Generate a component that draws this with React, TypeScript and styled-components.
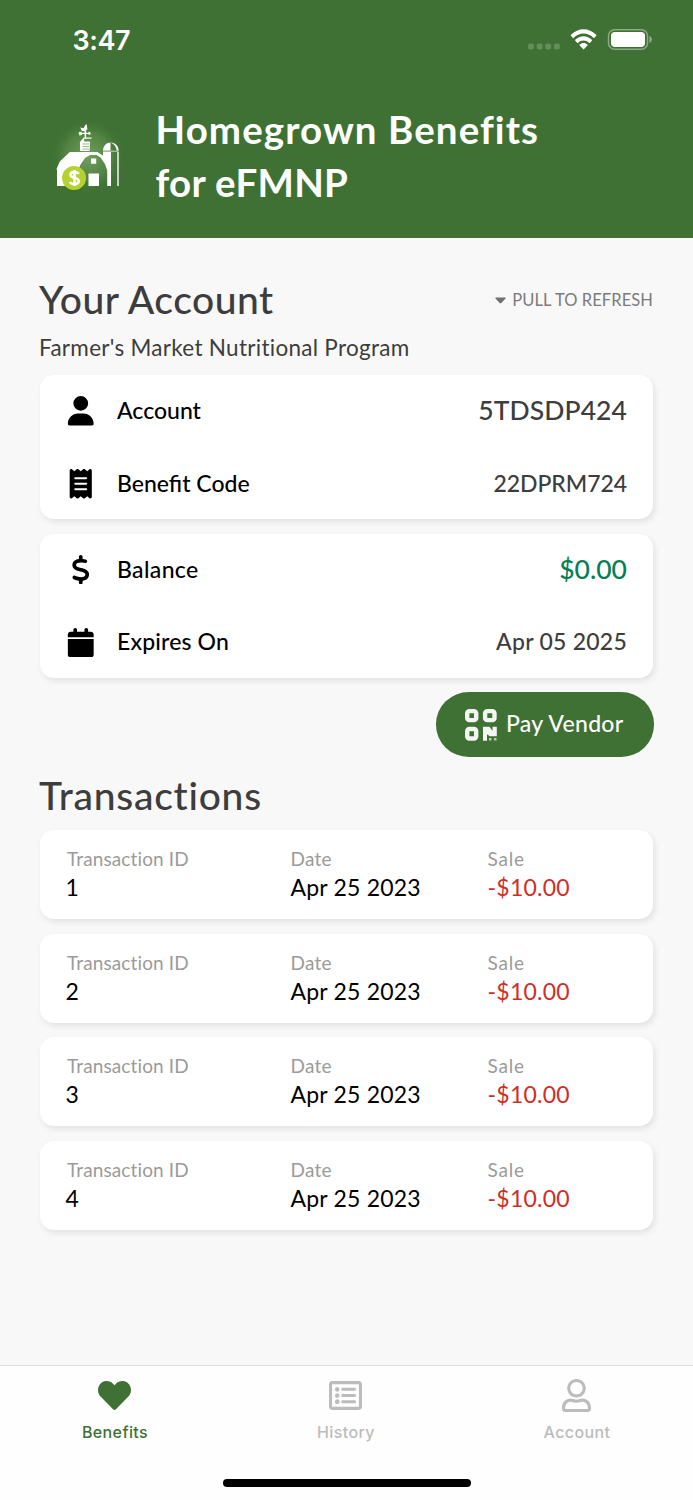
import React from "react";
import styled, { createGlobalStyle } from "styled-components";
import { FaCalendar, FaDollarSign, FaReceipt, FaUser } from "react-icons/fa6";
import { FaHeart, FaRegListAlt, FaRegUser } from "react-icons/fa";

const green = "#3e7133";

const GlobalStyle = createGlobalStyle`
  * { box-sizing: border-box; }
  body { margin: 0; background: #f8f8f8; font-family: Lato, "Noto Sans", sans-serif; color: #000; }
  svg { display: block; flex: none; }
`;

const Screen = styled.div`
  width: 693px;
  height: 1500px;
  display: flex;
  flex-direction: column;
  background: #f8f8f8;
  overflow: hidden;
  white-space: nowrap;
`;

const Header = styled.header`
  height: 238px;
  background: ${green};
  color: #fff;
`;

const StatusBar = styled.div`
  height: 78px;
  padding: 0 41px 0 72.5px;
  display: flex;
  align-items: center;
  justify-content: space-between;
`;

const Clock = styled.span`
  font: 600 27px/32px Inter, sans-serif;
  letter-spacing: -0.4px;
  padding-top: 3px;
`;

const Brand = styled.div`
  display: flex;
  align-items: flex-start;
  padding-left: 50px;
`;

const Title = styled.h1`
  margin: 25px 0 0 25.5px;
  font-size: 38.5px;
  font-weight: 700;
  line-height: 53px;
`;

const TitleLine = styled.span<{ $ls: number }>`
  display: block;
  letter-spacing: ${(p) => p.$ls}px;
`;

const Main = styled.main`
  flex: 1;
  padding: 37px 40px 0 39.5px;
`;

const SectionHead = styled.div`
  display: flex;
  align-items: center;
  justify-content: space-between;
  height: 50px;
`;

const Heading = styled.h2<{ $ls: number }>`
  margin: -1px 0 1px -0.5px;
  font-size: 39px;
  font-weight: 500;
  line-height: 50px;
  letter-spacing: ${(p) => p.$ls}px;
  color: #3d3d3d;
`;

const Refresh = styled.div`
  display: flex;
  align-items: center;
  gap: 6px;
  font-size: 16.5px;
  line-height: 20px;
  letter-spacing: 0.08px;
  color: #7b7b7b;
`;

const Program = styled.p`
  margin: 7px 0 12px -0.5px;
  font-size: 22.5px;
  line-height: 31px;
  letter-spacing: 0.28px;
  color: #3d3d3d;
`;

const Card = styled.section`
  height: 144px;
  margin-bottom: 14.5px;
  padding: 0 26px;
  border-radius: 14px;
  background: #fff;
  box-shadow: 2px 3px 6px rgba(0, 0, 0, 0.09);
`;

const Row = styled.div`
  display: flex;
  align-items: center;
  height: 72px;

  & + & {
    padding-top: 1.5px;
  }
`;

const IconSlot = styled.span`
  width: 31px;
  display: flex;
  justify-content: center;
  margin-right: 20.5px;
`;

const RowLabel = styled.span<{ $ls: number }>`
  flex: 1;
  font-size: 23px;
  font-weight: 500;
  padding-bottom: 2px;
  letter-spacing: ${(p) => p.$ls}px;
`;

const RowValue = styled.span<{ $size: number; $ls: number; $color?: string }>`
  font-size: ${(p) => p.$size}px;
  font-weight: 500;
  padding-bottom: 2px;
  letter-spacing: ${(p) => p.$ls}px;
  color: ${(p) => p.$color ?? "#3d3d3d"};
`;

const PayButton = styled.button`
  display: flex;
  align-items: center;
  width: 218px;
  height: 64.5px;
  margin: 0 -0.5px 14.5px auto;
  padding: 0 0 0 29px;
  border: 0;
  border-radius: 33px / 32px;
  background: ${green};
  color: #fff;
  font: 500 23px/30px Lato, "Noto Sans", sans-serif;
  letter-spacing: 0.3px;
`;

const PayText = styled.span`
  margin-left: 8.5px;
  padding-bottom: 3px;
`;

const TransactionList = styled.div`
  margin-top: 10px;
  display: grid;
  gap: 14.6px;
`;

const Transaction = styled.article`
  height: 89px;
  padding: 14px 26px 0;
  display: grid;
  grid-template-columns: 225px 197px 1fr;
  border-radius: 14px;
  background: #fff;
  box-shadow: 2px 3px 6px rgba(0, 0, 0, 0.09);
`;

const FieldLabel = styled.div<{ $ls: number; $indent?: number }>`
  padding-left: ${(p) => p.$indent ?? 0}px;
  font-size: 19px;
  line-height: 30px;
  letter-spacing: ${(p) => p.$ls}px;
  color: #9b9b9b;
`;

const FieldValue = styled.div<{ $ls?: number; $color?: string }>`
  font-size: 23px;
  line-height: 26px;
  letter-spacing: ${(p) => p.$ls ?? 0}px;
  color: ${(p) => p.$color ?? "#000"};
`;

const TabBar = styled.nav`
  height: 135.5px;
  flex: none;
  border-top: 1.5px solid #dedede;
  background: #fefefe;
`;

const Tabs = styled.div`
  display: grid;
  grid-template-columns: repeat(3, 1fr);
  height: 109px;
`;

const Tab = styled.div<{ $active?: boolean }>`
  display: flex;
  flex-direction: column;
  align-items: center;
  padding: 13.5px 2px 0 0;
  color: ${(p) => (p.$active ? green : "#bbbcbd")};
  font: 500 16px/20px Inter, sans-serif;
  letter-spacing: 0.4px;
`;

const TabLabel = styled.span`
  margin: 9.5px 0 0 1px;
`;

const HomeIndicator = styled.div`
  width: 248px;
  height: 8px;
  margin: 4px auto 0;
  border-radius: 4px;
  background: #000;
`;

const StatusIcons = () => (
  <svg width="124" height="24" viewBox="528 27 124 24">
    <g fill="#fff" fillOpacity=".2">
      <rect x="528" y="43.5" width="5.8" height="6" rx="1.8" />
      <rect x="536.7" y="43.5" width="5.8" height="6" rx="1.8" />
      <rect x="545.3" y="43.5" width="5.8" height="6" rx="1.8" />
      <rect x="554" y="43.5" width="5.8" height="6" rx="1.8" />
    </g>
    <path
      transform="translate(569.8 29) scale(1.62 1.78)"
      fill="#fff"
      d="M8.5 2.5c2.3 0 4.5.9 6.2 2.5.1.1.3.1.4 0l1.2-1.2c.2-.2.2-.3 0-.5C12-.9 5-.9.7 3.3c-.2.2-.2.3 0 .5L1.9 5c.1.1.3.1.4 0C4 3.4 6.2 2.5 8.5 2.5zm0 4c1.3 0 2.5.5 3.4 1.3.1.1.3.1.5 0l1.2-1.2c.2-.2.2-.3 0-.5-2.9-2.7-7.3-2.7-10.2 0-.2.2-.2.3 0 .5l1.2 1.2c.2.1.4.1.5 0 .9-.8 2.1-1.3 3.4-1.3zm2.4 2.7c.1-.2.1-.3 0-.5-1.4-1.2-3.4-1.2-4.8 0-.1.2-.1.3 0 .5l2.1 2.1c.2.2.4.2.6 0z"
    />
    <rect x="608.5" y="29.7" width="39" height="19.5" rx="6" fill="none" stroke="#fff" strokeOpacity=".4" strokeWidth="1.5" />
    <rect x="611" y="32" width="34" height="15" rx="4" fill="#fff" />
    <path d="M649.5 36v7c1.4-.6 2.300-1.900 2.300-3.500s-.9-2.900-2.300-3.500z" fill="#fff" fillOpacity=".45" />
  </svg>
);

const FarmLogo = () => (
  <svg width="80" height="120" viewBox="50 78 80 120">
    <defs>
      <radialGradient id="glow">
        <stop offset="0" stopColor="#79a565" stopOpacity=".9" />
        <stop offset=".6" stopColor="#659451" stopOpacity=".55" />
        <stop offset="1" stopColor={green} stopOpacity="0" />
      </radialGradient>
    </defs>
    <circle cx="88" cy="156" r="38" fill="url(#glow)" />
    <g fill="#fff">
      <path d="M57 186v-16.500h-.7l3.500-8 10-9.500H97.500l6 4 4.500 7 2.200 6.500V186h-3v-15.500l-2.200-6.500-4.500-6.500-4-2.500H90l-5 3-5 7.500-3 9V186z" />
      <path d="M80 151v-8.500h-.5l4.700-5.500v4.500H90l-.4 9.500z" />
      <path d="M84.500 137.500h7v1.200h-7z" />
      <path d="M84.600 130h1.500v9h-1.500z" />
      <path d="M78.800 132.800h11.500v1.200H78.800z" />
      <path d="M78.800 132l2.800-.3.400 3.300-2.700.4zM88.500 131.700l1.800.6v2.700l-1.800-.4z" />
      <path d="M80.200 127.500l3.300.8 1.900-3.300 1.200-1 .8 5-1.900 2.200-3.600-.2z" />
      <path d="M103 150.500c.2-4.500 3.500-8 7.500-8v8zM110.500 142.500c5 .2 8.200 3.600 8.200 8h-2.200c0-3.200-2.300-6.600-6-8z" />
      <path d="M103 152h8v34h-1.500v-17l-3-7.500-3.500-5.500z" />
      <path d="M117.300 152h1.400v34h-1.400z" />
      <path d="M91 158.500h5.200v5.300H91zM88.500 173.500H99V186H88.500z" />
    </g>
    <path d="M103 151.200h15.700" stroke="#fff" strokeWidth=".7" />
    <path d="M82.500 144h6.500M82.500 146.500h6.500M82.500 149h6.500" stroke="#8db17f" strokeWidth=".9" />
    <circle cx="74" cy="178" r="12" fill="#b4d333" />
    <path d="M78.500 174c-1.100-2.700-8-2.600-8 .7 0 4.300 8.300 2.300 8.300 6.300 0 3.800-7.800 3.800-8.800.8M74.500 170v16" fill="none" stroke="#fff" strokeWidth="2.600" />
  </svg>
);

const QrIcon = () => (
  <svg width="33" height="34" viewBox="0 -1.500 33 34">
    <g fill="none" stroke="#f3f6f2" strokeWidth="4.400">
      <rect x="2.200" y="2.600" width="9" height="9" rx="2.200" />
      <rect x="20.100" y="2.600" width="9.400" height="9" rx="2.200" />
      <rect x="2.200" y="20.500" width="9" height="9.500" rx="2.200" />
    </g>
    <path d="M18 18.300h6.500l3 4.200v-4.200h4.300v9.500h-7l-2.800-2v6.400h-4z" fill="#f3f6f2" />
    <path d="M24 29.500h2.500V32H24zM29 29.500h2.500V32H29z" fill="#b9ccb4" />
  </svg>
);

const transactions = [1, 2, 3, 4];

export default function App() {
  return (
    <Screen>
      <GlobalStyle />
      <Header>
        <StatusBar>
          <Clock>3:47</Clock>
          <StatusIcons />
        </StatusBar>
        <Brand>
          <FarmLogo />
          <Title>
            <TitleLine $ls={1.07}>Homegrown Benefits</TitleLine>
            <TitleLine $ls={0.3}>for eFMNP</TitleLine>
          </Title>
        </Brand>
      </Header>
      <Main>
        <SectionHead>
          <Heading $ls={0.5}>Your Account</Heading>
          <Refresh>
            <svg width="11" height="7" viewBox="0 0 11 7">
              <path d="M1 .5h9q1.200.2.500 1.100L6.300 6q-.8.700-1.600 0L.5 1.600Q-.2.700 1 .5z" fill="#707070" />
            </svg>
            PULL TO REFRESH
          </Refresh>
        </SectionHead>
        <Program>Farmer's Market Nutritional Program</Program>
        <Card>
          <Row>
            <IconSlot><FaUser size={29.5} /></IconSlot>
            <RowLabel $ls={0}>Account</RowLabel>
            <RowValue $size={26.5} $ls={0.08}>5TDSDP424</RowValue>
          </Row>
          <Row>
            <IconSlot><FaReceipt size={29.5} /></IconSlot>
            <RowLabel $ls={0}>Benefit Code</RowLabel>
            <RowValue $size={23} $ls={-0.05}>22DPRM724</RowValue>
          </Row>
        </Card>
        <Card>
          <Row>
            <IconSlot><FaDollarSign size={29.5} /></IconSlot>
            <RowLabel $ls={0.35}>Balance</RowLabel>
            <RowValue $size={26.5} $ls={0} $color="#067f55">$0.00</RowValue>
          </Row>
          <Row>
            <IconSlot><FaCalendar size={29.5} /></IconSlot>
            <RowLabel $ls={0.15}>Expires On</RowLabel>
            <RowValue $size={23} $ls={0.25}>Apr 05 2025</RowValue>
          </Row>
        </Card>
        <PayButton>
          <QrIcon />
          <PayText>Pay Vendor</PayText>
        </PayButton>
        <Heading $ls={0.75}>Transactions</Heading>
        <TransactionList>
          {transactions.map((id) => (
            <Transaction key={id}>
              <div>
                <FieldLabel $ls={0.12} $indent={1.5}>Transaction ID</FieldLabel>
                <FieldValue>{id}</FieldValue>
              </div>
              <div>
                <FieldLabel $ls={0.2}>Date</FieldLabel>
                <FieldValue $ls={0.2}>Apr 25 2023</FieldValue>
              </div>
              <div>
                <FieldLabel $ls={0.8}>Sale</FieldLabel>
                <FieldValue $ls={0.25} $color="#cf2e27">-$10.00</FieldValue>
              </div>
            </Transaction>
          ))}
        </TransactionList>
      </Main>
      <TabBar>
        <Tabs>
          <Tab $active>
            <FaHeart size={33} />
            <TabLabel>Benefits</TabLabel>
          </Tab>
          <Tab>
            <FaRegListAlt size={33} />
            <TabLabel>History</TabLabel>
          </Tab>
          <Tab>
            <FaRegUser size={33} />
            <TabLabel>Account</TabLabel>
          </Tab>
        </Tabs>
        <HomeIndicator />
      </TabBar>
    </Screen>
  );
}
